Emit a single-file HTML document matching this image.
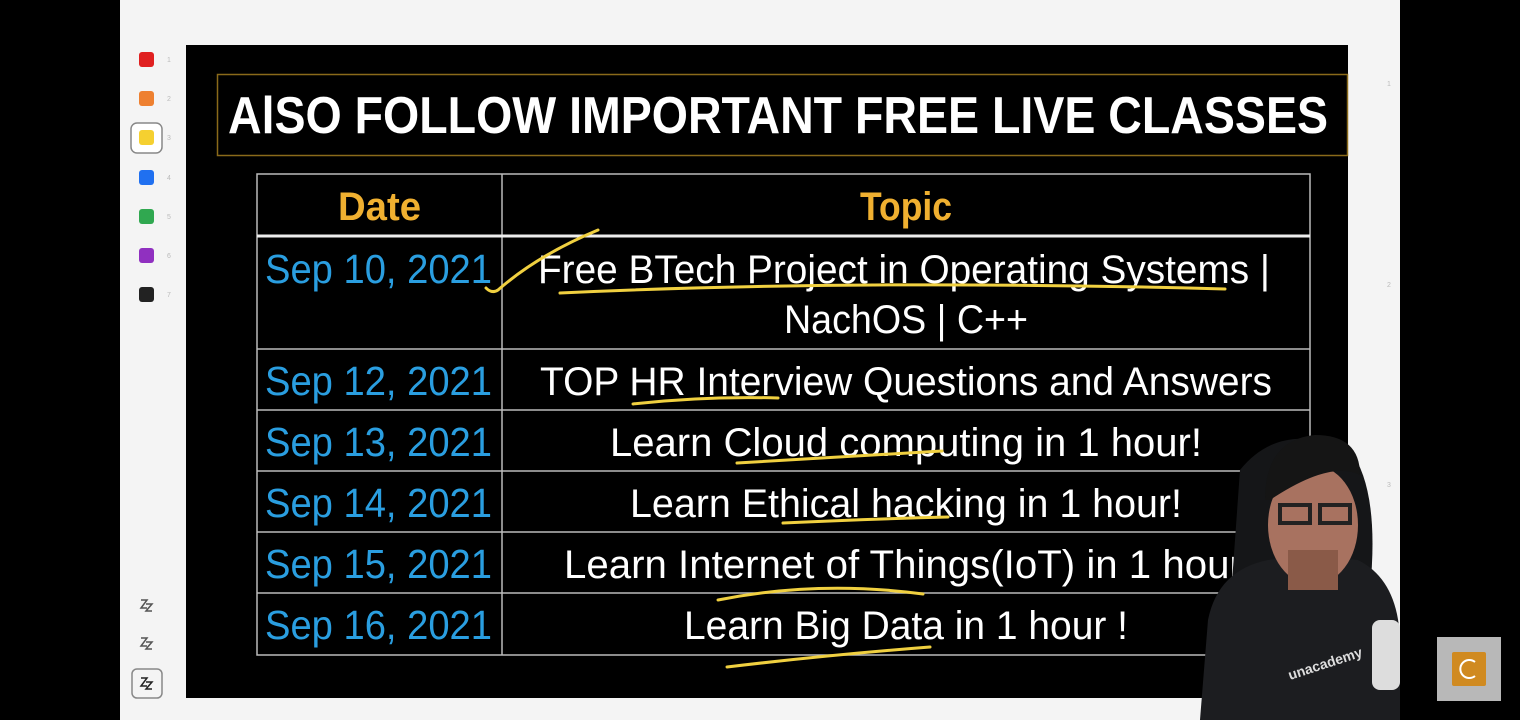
<!DOCTYPE html>
<html><head><meta charset="utf-8"><style>
html,body{margin:0;padding:0;background:#000;width:1520px;height:720px;overflow:hidden}
svg{display:block}
</style></head><body>
<svg width="1520" height="720" viewBox="0 0 1520 720" xmlns="http://www.w3.org/2000/svg" font-family="Liberation Sans, sans-serif">
<rect width="1520" height="720" fill="#000"/>
<rect x="120" y="0" width="1280" height="720" fill="#f4f4f4"/>
<!-- palette -->
<rect x="139" y="52" width="15" height="15" rx="3" fill="#e02020"/>
<rect x="139" y="91" width="15" height="15" rx="3" fill="#ee8030"/>
<rect x="131" y="123" width="31" height="30" rx="6" fill="#fff" stroke="#888" stroke-width="1.5"/>
<rect x="139" y="130" width="15" height="15" rx="3" fill="#f5d030"/>
<rect x="139" y="170" width="15" height="15" rx="3" fill="#2070f0"/>
<rect x="139" y="209" width="15" height="15" rx="3" fill="#30a850"/>
<rect x="139" y="248" width="15" height="15" rx="3" fill="#9030c0"/>
<rect x="139" y="287" width="15" height="15" rx="3" fill="#222"/>
<g fill="#bbb" font-size="7"><text x="167" y="62">1</text><text x="167" y="101">2</text><text x="167" y="140">3</text><text x="167" y="180">4</text><text x="167" y="219">5</text><text x="167" y="258">6</text><text x="167" y="297">7</text></g>
<g stroke="#555" stroke-width="1.5" fill="none">
<path d="M141 600 h6 l-6 8 h6 M146 604 h6 l-6 7 h6"/>
<path d="M141 638 h6 l-6 8 h6 M146 642 h6 l-6 7 h6"/>
<rect x="132" y="669" width="30" height="29" rx="5" stroke="#888"/>
<path d="M141 678 h6 l-6 8 h6 M146 682 h6 l-6 7 h6" stroke="#222"/>
</g>
<g fill="#bbb" font-size="7"><text x="1387" y="86">1</text><text x="1387" y="287">2</text><text x="1387" y="487">3</text></g>
<!-- slide -->
<rect x="186" y="45" width="1162" height="653" fill="#000"/>
<rect x="217.5" y="74.5" width="1130" height="81" fill="none" stroke="#8a6a1a" stroke-width="1.5"/>
<text x="228" y="133" font-size="52" font-weight="bold" fill="#fff" textLength="1100" lengthAdjust="spacingAndGlyphs">AlSO FOLLOW IMPORTANT FREE LIVE CLASSES</text>
<!-- table -->
<g stroke="#bbb" stroke-width="1.5" fill="none">
<rect x="257" y="174" width="1053" height="481"/>
<line x1="502" y1="174" x2="502" y2="655"/>
<line x1="257" y1="349" x2="1310" y2="349"/>
<line x1="257" y1="410" x2="1310" y2="410"/>
<line x1="257" y1="471" x2="1310" y2="471"/>
<line x1="257" y1="532" x2="1310" y2="532"/>
<line x1="257" y1="593" x2="1310" y2="593"/>
</g>
<line x1="257" y1="236" x2="1310" y2="236" stroke="#eee" stroke-width="3"/>
<g font-size="40" font-weight="bold" fill="#f0b030">
<text x="338" y="220" textLength="83" lengthAdjust="spacingAndGlyphs">Date</text>
<text x="860" y="220" textLength="92" lengthAdjust="spacingAndGlyphs">Topic</text>
</g>
<g font-size="41" fill="#2a9ee0">
<text x="265" y="283" textLength="227" lengthAdjust="spacingAndGlyphs">Sep 10, 2021</text>
<text x="265" y="395" textLength="227" lengthAdjust="spacingAndGlyphs">Sep 12, 2021</text>
<text x="265" y="456" textLength="227" lengthAdjust="spacingAndGlyphs">Sep 13, 2021</text>
<text x="265" y="517" textLength="227" lengthAdjust="spacingAndGlyphs">Sep 14, 2021</text>
<text x="265" y="578" textLength="227" lengthAdjust="spacingAndGlyphs">Sep 15, 2021</text>
<text x="265" y="639" textLength="227" lengthAdjust="spacingAndGlyphs">Sep 16, 2021</text>
</g>
<g font-size="40" fill="#fff">
<text x="538" y="283" textLength="732" lengthAdjust="spacingAndGlyphs">Free BTech Project in Operating Systems |</text>
<text x="784" y="333" textLength="244" lengthAdjust="spacingAndGlyphs">NachOS | C++</text>
<text x="540" y="395" textLength="732" lengthAdjust="spacingAndGlyphs">TOP HR Interview Questions and Answers</text>
<text x="610" y="456" textLength="592" lengthAdjust="spacingAndGlyphs">Learn Cloud computing in 1 hour!</text>
<text x="630" y="517" textLength="552" lengthAdjust="spacingAndGlyphs">Learn Ethical hacking in 1 hour!</text>
<text x="564" y="578" textLength="690" lengthAdjust="spacingAndGlyphs">Learn Internet of Things(IoT) in 1 hour!</text>
<text x="684" y="639" textLength="444" lengthAdjust="spacingAndGlyphs">Learn Big Data in 1 hour !</text>
</g>
<!-- annotations -->
<g stroke="#f0d040" stroke-width="3" fill="none" stroke-linecap="round">
<path d="M486 288 q6 6 12 2 q40 -35 100 -60"/>
<path d="M560 293 q300 -14 665 -4"/>
<path d="M633 404 q70 -8 145 -6"/>
<path d="M737 463 q100 -6 205 -12"/>
<path d="M783 523 q85 -4 165 -6"/>
<path d="M718 600 q100 -20 205 -6"/>
<path d="M727 667 q100 -12 203 -20"/>
</g>
<!-- presenter -->
<path d="M1240 470 q40 -50 110 -20 q30 40 20 140 l-140 20 z" fill="#151618"/>
<path d="M1200 720 l8 -100 q10 -50 60 -60 l40 -5 l50 5 q40 20 42 80 l0 80 z" fill="#1c1d20"/>
<ellipse cx="1313" cy="525" rx="45" ry="60" fill="#a87260"/>
<path d="M1265 500 q0 -60 50 -65 q45 0 45 40 q-30 -15 -90 25 z" fill="#151515"/>
<rect x="1288" y="550" width="50" height="40" fill="#8a5a48"/>
<path d="M1280 505 h30 v18 h-30 z M1320 505 h30 v18 h-30 z" fill="none" stroke="#222" stroke-width="4"/>
<rect x="1372" y="620" width="28" height="70" rx="8" fill="#ddd"/>
<text x="1290" y="680" font-size="14" fill="#ddd" font-weight="bold" transform="rotate(-18 1290 680)">unacademy</text>
<!-- logo -->
<rect x="1437" y="637" width="64" height="64" fill="#b8b8b8"/>
<rect x="1452" y="652" width="34" height="34" rx="2" fill="#d08a20"/>
<path d="M1475 662 a9 9 0 1 0 0 14" fill="none" stroke="#fff" stroke-width="2"/>
</svg>
</body></html>
